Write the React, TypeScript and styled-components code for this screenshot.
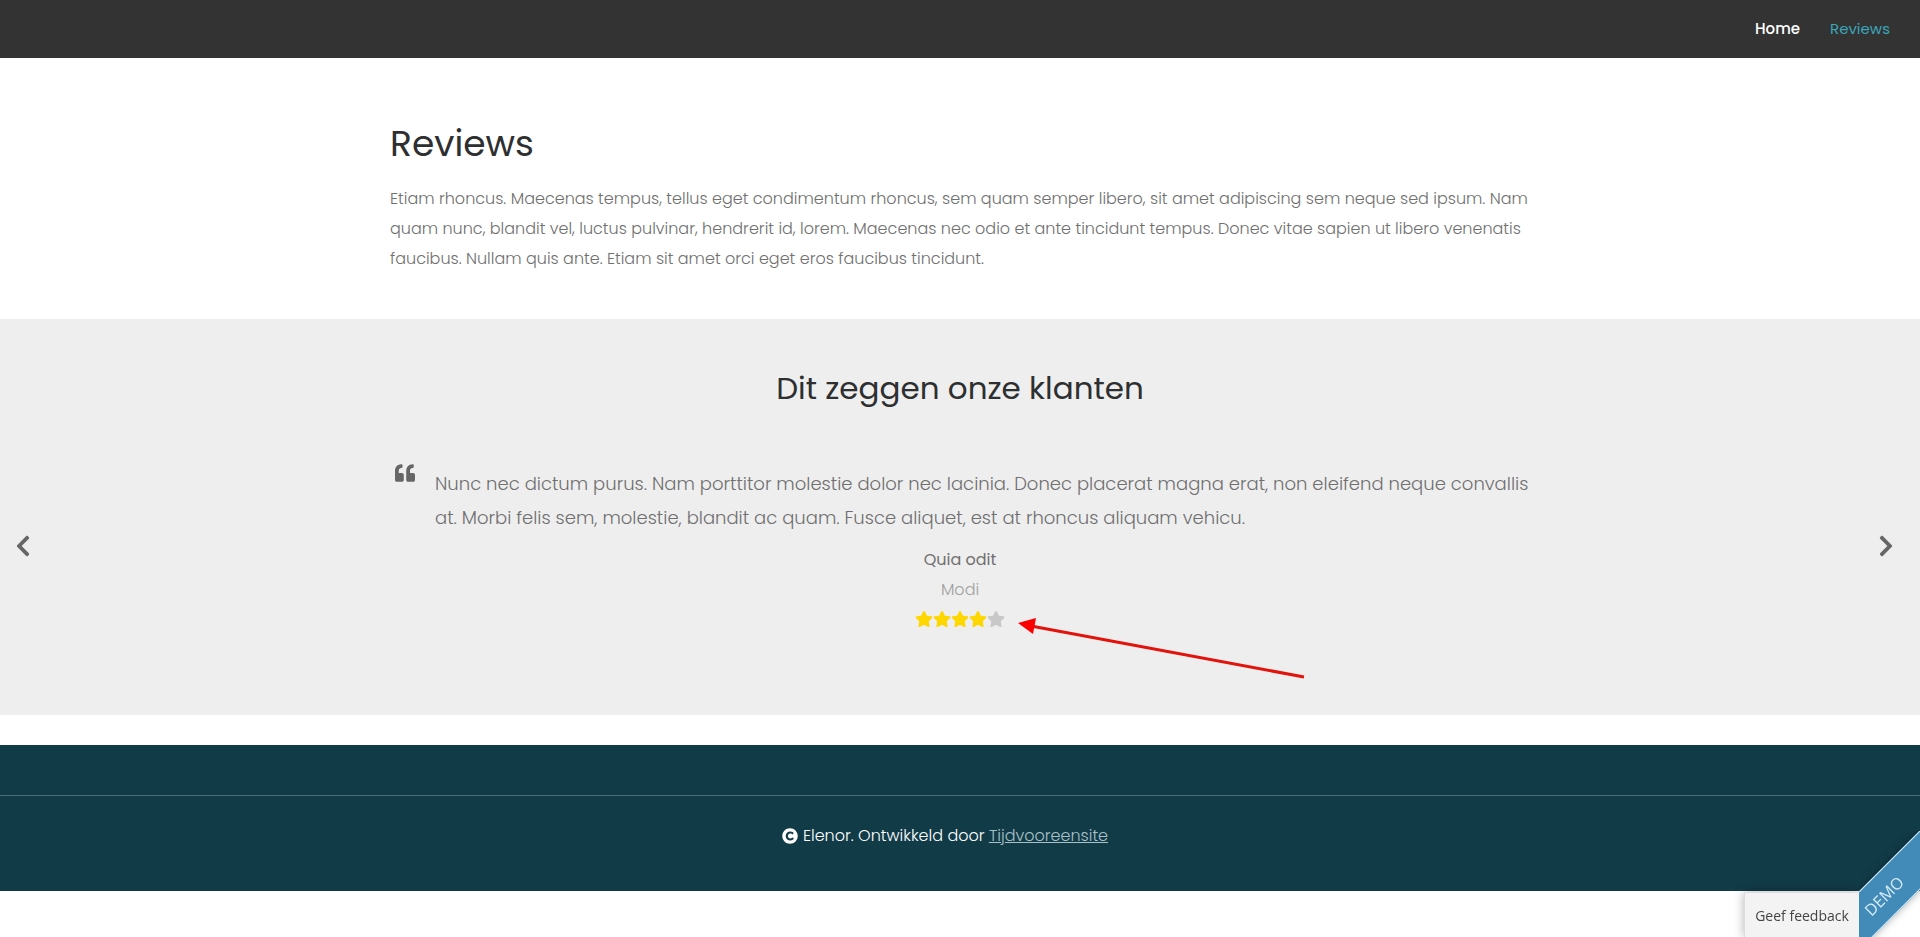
import React from 'react';
import styled, { createGlobalStyle } from 'styled-components';
import { FaChevronLeft, FaChevronRight, FaCopyright, FaQuoteLeft, FaStar } from 'react-icons/fa';

const GlobalStyle = createGlobalStyle`
  *, *::before, *::after { box-sizing: border-box; }
  body {
    margin: 0;
    background: #fff;
    color: #707070;
    font-family: Poppins, Inter, "Open Sans", sans-serif;
    font-size: 16px;
    font-weight: 300;
    line-height: 30px;
  }
  h1, h2, p, blockquote { margin: 0; padding: 0; }
`;

const Header = styled.header`
  display: flex;
  align-items: center;
  justify-content: flex-end;
  height: 58px;
  padding: 0 30px;
  background: #333;
`;

const Nav = styled.nav`
  display: flex;
  gap: 30px;
`;

const NavLink = styled.a<{ $active?: boolean }>`
  color: ${({ $active }) => ($active ? '#3aa6b9' : '#fff')};
  font-size: 15px;
  font-weight: ${({ $active }) => ($active ? 400 : 500)};
  text-decoration: none;
`;

const Container = styled.div`
  max-width: 1170px;
  margin: 0 auto;
  padding: 0 15px;
`;

const Intro = styled.section`
  padding: 66px 0 45px;
`;

const Title = styled.h1`
  margin-bottom: 20px;
  color: #2d2f30;
  font-size: 36px;
  font-weight: 400;
  line-height: 40px;
`;

const Testimonials = styled.section`
  padding: 49px 0 82px;
  background: #eee;
`;

const Subtitle = styled.h2`
  margin-bottom: 51px;
  color: #2d2f30;
  font-size: 31px;
  font-weight: 400;
  line-height: 40px;
  text-align: center;
`;

const Slider = styled.div`
  position: relative;
  padding-top: 8px;
`;

const Quote = styled.blockquote`
  display: flex;
  gap: 20px;
  padding-left: 5px;
  font-size: 18px;
  line-height: 34px;

  svg { flex: none; margin-top: -4px; color: #666; }
`;

const Author = styled.p<{ $muted?: boolean }>`
  color: ${({ $muted }) => ($muted ? '#a0a0a0' : '#707070')};
  font-weight: ${({ $muted }) => ($muted ? 300 : 400)};
  text-align: center;
`;

const AuthorBlock = styled.div`
  padding-top: 10px;
`;

const Rating = styled.div`
  position: relative;
  display: flex;
  width: 90px;
  height: 28px;
  margin: 0 auto;
  align-items: center;
`;

const Star = styled(FaStar)<{ $on: boolean }>`
  width: 18px;
  height: 16px;
  color: ${({ $on }) => ($on ? '#ffd700' : '#c8c8c8')};
`;

const Arrow = styled.svg`
  position: absolute;
  top: 10px;
  left: 102px;
`;

const SlideButton = styled.button<{ $side: 'left' | 'right' }>`
  position: absolute;
  top: 50%;
  ${({ $side }) => ($side === 'left' ? 'left: 9px' : 'right: 20px')};
  display: flex;
  align-items: center;
  justify-content: center;
  width: 28px;
  height: 60px;
  padding: 0;
  border: 0;
  background: none;
  color: #666;
  transform: translateY(-50%);
`;

const Footer = styled.footer`
  margin-top: 30px;
  padding: 50px 0 40px;
  background: #113b47;
  color: #fff;
`;

const FooterLine = styled.p`
  display: flex;
  align-items: center;
  justify-content: center;
  gap: 5px;
  padding: 25px 30px 0 0;
  border-top: 1px solid #4b6d77;
`;

const FooterLink = styled.a`
  color: #a9c0c8;
`;

const Corner = styled.div`
  position: fixed;
  right: 0;
  bottom: 0;
  display: flex;
  align-items: flex-end;
`;

const FeedbackButton = styled.button`
  width: 115px;
  height: 45px;
  padding: 2px 0 0;
  border: 1px solid #ddd;
  border-width: 1px 0 0 1px;
  background: #f3f3f3;
  box-shadow: 0 0 10px rgba(0, 0, 0, 0.3);
  color: #444;
  font: 400 14px/20px "Open Sans", sans-serif;
`;

const RibbonFrame = styled.div`
  position: relative;
  width: 61px;
  height: 106px;
  overflow: hidden;
`;

const Ribbon = styled.div`
  position: absolute;
  top: 44px;
  left: -50px;
  width: 150px;
  height: 42px;
  border: 1px solid #d5ecf8;
  background: #428bb8;
  box-shadow: 0 0 8px rgba(0, 0, 0, 0.3);
  color: #d5ecf8;
  font: 400 16px/40px "Open Sans", sans-serif;
  text-align: center;
  transform: rotate(-45deg);
`;

export default function App() {
  return (
    <>
      <GlobalStyle />
      <Header>
        <Nav>
          <NavLink href="#home">Home</NavLink>
          <NavLink href="#reviews" $active>Reviews</NavLink>
        </Nav>
      </Header>
      <main>
        <Intro>
          <Container>
            <Title>Reviews</Title>
            <p>
              Etiam rhoncus. Maecenas tempus, tellus eget condimentum rhoncus, sem quam semper libero, sit amet adipiscing sem neque sed ipsum. Nam
              quam nunc, blandit vel, luctus pulvinar, hendrerit id, lorem. Maecenas nec odio et ante tincidunt tempus. Donec vitae sapien ut libero venenatis
              faucibus. Nullam quis ante. Etiam sit amet orci eget eros faucibus tincidunt.
            </p>
          </Container>
        </Intro>
        <Testimonials>
          <Subtitle>Dit zeggen onze klanten</Subtitle>
          <Slider>
            <Container>
              <Quote>
                <FaQuoteLeft size={20} />
                <p>
                  Nunc nec dictum purus. Nam porttitor molestie dolor nec lacinia. Donec placerat magna erat, non eleifend neque convallis
                  at. Morbi felis sem, molestie, blandit ac quam. Fusce aliquet, est at rhoncus aliquam vehicu.
                </p>
              </Quote>
              <AuthorBlock>
                <Author>Quia odit</Author>
                <Author $muted>Modi</Author>
                <Rating role="img" aria-label="4 / 5">
                  {[1, 2, 3, 4, 5].map((n) => <Star key={n} $on={n <= 4} />)}
                  <Arrow width="288" height="64" viewBox="0 0 288 64" aria-hidden="true">
                    <path d="M14 11L287 62" stroke="#e3120b" strokeWidth="3" fill="none" />
                    <path d="M1 8L19 3L16 19Z" fill="#fb0000" />
                  </Arrow>
                </Rating>
              </AuthorBlock>
            </Container>
            <SlideButton $side="left" aria-label="Vorige"><FaChevronLeft size={24} /></SlideButton>
            <SlideButton $side="right" aria-label="Volgende"><FaChevronRight size={24} /></SlideButton>
          </Slider>
        </Testimonials>
      </main>
      <Footer>
        <FooterLine>
          <FaCopyright size={16} />
          <span>Elenor. Ontwikkeld door <FooterLink href="#tijdvooreensite">Tijdvooreensite</FooterLink></span>
        </FooterLine>
      </Footer>
      <Corner>
        <FeedbackButton>Geef feedback</FeedbackButton>
        <RibbonFrame><Ribbon>DEMO</Ribbon></RibbonFrame>
      </Corner>
    </>
  );
}
